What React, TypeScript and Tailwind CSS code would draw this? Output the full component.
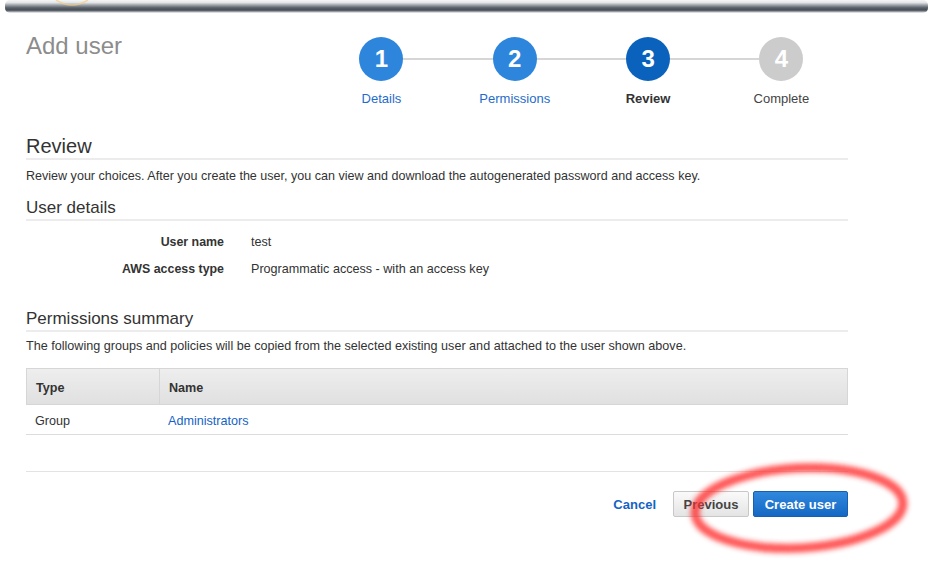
import React from 'react';

type Step = { n: number; label: string; state: 'done' | 'current' | 'todo' };

const steps: Step[] = [
  { n: 1, label: 'Details', state: 'done' },
  { n: 2, label: 'Permissions', state: 'done' },
  { n: 3, label: 'Review', state: 'current' },
  { n: 4, label: 'Complete', state: 'todo' },
];

const circleClx = {
  done: 'bg-[#2d86dc]',
  current: 'bg-[#0a62bd]',
  todo: 'bg-[#cccccc]',
};

const labelClx = {
  done: 'text-[#1f6ccb]',
  current: 'text-[#333] font-bold',
  todo: 'text-[#444]',
};

const Stepper = () => (
  <div className="flex mt-[5px]">
    {steps.map((s, i) => (
      <div key={s.n} className="flex w-[133.3px] flex-col items-center">
        <div className="flex w-full items-center">
          <div className={`h-[2px] flex-1 ${i === 0 ? '' : 'bg-[#d6d6d6]'}`} />
          <div
            className={`flex h-[44px] w-[44px] items-center justify-center rounded-full text-[24px] font-bold text-white ${circleClx[s.state]}`}
          >
            {s.n}
          </div>
          <div className={`h-[2px] flex-1 ${i === steps.length - 1 ? '' : 'bg-[#d6d6d6]'}`} />
        </div>
        <span className={`mt-[10px] text-[13px] leading-[16px] ${labelClx[s.state]}`}>{s.label}</span>
      </div>
    ))}
  </div>
);

const SectionTitle: React.FC<{ title: string; size: 'lg' | 'md'; className?: string }> = ({ title, size, className }) => (
  <h2
    className={`border-b-2 border-[#ececec] text-[#333] ${
      size === 'lg' ? 'text-[20px] leading-[24px]' : 'text-[17px] leading-[22px]'
    } ${className ?? ''}`}
  >
    {title}
  </h2>
);

const DetailRow: React.FC<{ label: string; value: string }> = ({ label, value }) => (
  <div className="flex leading-[18px]">
    <div className="w-[198px] text-right text-[12.4px] font-bold text-[#333]">{label}</div>
    <div className="pl-[27px] text-[12.6px] text-[#333]">{value}</div>
  </div>
);

const TopBar = () => (
  <div className="relative h-[13px]">
    <div className="mx-[5px] h-[13px] rounded-[5px] bg-[linear-gradient(to_bottom,#f6f6f7_0%,#e2e4e6_20%,#9a9fa6_40%,#5a6068_60%,#464c55_78%,#b0b4ba_92%,#ffffff_100%)] blur-[0.6px]" />
    <svg className="absolute left-[52px] top-0" width="40" height="8" viewBox="0 0 40 8">
      <path d="M4 0 Q20 10 36 0" fill="none" stroke="#f3cf8a" strokeWidth="1.5" opacity="0.7" />
    </svg>
  </div>
);

const App = () => (
  <div className="relative h-[563px] w-[933px] overflow-hidden bg-white font-['Liberation_Sans',Arial,sans-serif] text-[#333]">
    <TopBar />
    <div className="w-[848px] pl-[26px]">
      <div className="flex items-start pt-[19px]">
        <h1 className="text-[24px] leading-[28px] text-[#8c8c8c]">Add user</h1>
        <div className="ml-auto">
          <Stepper />
        </div>
      </div>

      <SectionTitle title="Review" size="lg" className="mt-[27px]" />
      <p className="mt-[7px] text-[12.55px] leading-[18px]">
        Review your choices. After you create the user, you can view and download the autogenerated password and
        access key.
      </p>

      <SectionTitle title="User details" size="md" className="mt-[12px]" />
      <div className="mt-[12px] flex flex-col gap-[9px]">
        <DetailRow label="User name" value="test" />
        <DetailRow label="AWS access type" value="Programmatic access - with an access key" />
      </div>

      <SectionTitle title="Permissions summary" size="md" className="mt-[30px]" />
      <p className="mt-[5px] text-[12.6px] leading-[18px]">
        The following groups and policies will be copied from the selected existing user and attached to the user
        shown above.
      </p>

      <div className="mt-[13px] text-[12.6px]">
        <div className="flex h-[37px] border border-[#d6d6d6] bg-[linear-gradient(to_bottom,#eeeeee,#e0e0e0)] font-bold">
          <div className="flex w-[133px] items-center border-r border-[#d6d6d6] pl-[9px] pt-[3px]">Type</div>
          <div className="flex items-center pl-[9px] pt-[3px]">Name</div>
        </div>
        <div className="flex h-[30px] border-b border-[#dcdcdc]">
          <div className="flex w-[133px] items-center pl-[9px] pt-[4px]">Group</div>
          <div className="flex items-center pl-[9px] pt-[4px] text-[#1463c4]">Administrators</div>
        </div>
      </div>

      <div className="mt-[36px] h-[1px] bg-[#e3e3e3]" />

      <div className="mt-[19px] flex items-center justify-end text-[13px] font-bold">
        <button className="mr-[17px] pt-[2px] text-[#1463c4]">Cancel</button>
        <button className="h-[26px] w-[76px] rounded-[2px] border border-[#c8c8c8] bg-[linear-gradient(to_bottom,#fafafa,#e4e4e4)] pt-[2px] text-[#444]">
          Previous
        </button>
        <button className="ml-[4px] h-[26px] w-[95px] rounded-[2px] border border-[#175fb3] bg-[linear-gradient(to_bottom,#3088dc,#1468c4)] pt-[2px] text-white">
          Create user
        </button>
      </div>
    </div>

    <svg className="pointer-events-none absolute left-[680px] top-[450px]" width="250" height="115" viewBox="0 0 250 115">
      <defs>
        <filter id="soft" x="-20%" y="-20%" width="140%" height="140%">
          <feGaussianBlur stdDeviation="2.4" />
        </filter>
      </defs>
      <ellipse
        cx="119"
        cy="58"
        rx="104"
        ry="40"
        transform="rotate(-3 119 58)"
        fill="none"
        stroke="#ff2e2e"
        strokeWidth="9"
        opacity="0.8"
        filter="url(#soft)"
      />
    </svg>
  </div>
);

export default App;
